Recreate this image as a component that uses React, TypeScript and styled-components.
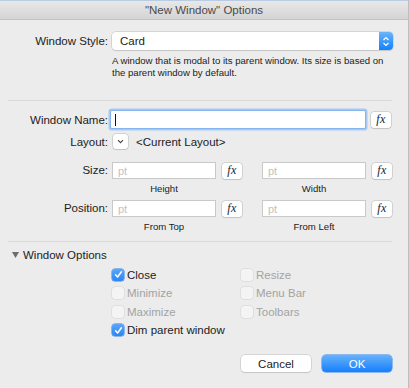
import React from 'react';
import styled, { createGlobalStyle } from 'styled-components';

const GlobalStyle = createGlobalStyle`
  html, body {
    margin: 0;
    padding: 0;
    background: #ececec;
  }
  * {
    box-sizing: border-box;
  }
`;

const FONT = `"Liberation Sans", Arial, sans-serif`;

const Window = styled.div`
  width: 409px;
  height: 388px;
  background: #ececec;
  font-family: ${FONT};
  color: #222;
  border-right: 1px solid #bdbdbd;
  display: flex;
  flex-direction: column;
  overflow: hidden;
`;

const TitleBar = styled.div`
  height: 20px;
  border-top: 1px solid #b9cbe0;
  border-bottom: 1px solid #c4c4c4;
  background: linear-gradient(#e9e8e9, #d5d4d5);
  display: flex;
  align-items: center;
  justify-content: center;
  font-size: 11.5px;
  color: #4a4a4a;
`;

const Section = styled.div<{ $pt: number; $pb: number }>`
  padding: ${(p) => p.$pt}px 16px ${(p) => p.$pb}px 8px;
  display: flex;
  flex-direction: column;
`;

const Separator = styled.div`
  margin: 0 16px 0 8px;
  border-top: 1px solid #d9d9d9;
`;

const FormRow = styled.div<{ $mt?: number; $top?: boolean }>`
  display: grid;
  grid-template-columns: 100px 1fr;
  column-gap: 4px;
  align-items: ${(p) => (p.$top ? 'start' : 'center')};
  margin-top: ${(p) => p.$mt ?? 0}px;
`;

const Label = styled.div<{ $offset?: number }>`
  text-align: right;
  font-size: 11.5px;
  color: #222;
  margin-top: ${(p) => p.$offset ?? 0}px;
`;

const SelectBox = styled.div`
  height: 18px;
  width: 281px;
  background: #fff;
  border-radius: 4px;
  box-shadow: 0 0 0 0.5px #bdbdbd, 0 1px 1px rgba(0, 0, 0, 0.12);
  display: flex;
  align-items: center;
  justify-content: space-between;
  padding-left: 8px;
  font-size: 11.5px;
  color: #222;
`;

const Stepper = styled.div`
  width: 14px;
  height: 18px;
  border-radius: 0 4px 4px 0;
  background: linear-gradient(#6ab4fb, #1282fb);
  display: flex;
  align-items: center;
  justify-content: center;
`;

const Description = styled.div`
  margin: 5px 0 0 104px;
  font-size: 9.6px;
  line-height: 12px;
  color: #222;
`;

const FieldLine = styled.div`
  display: flex;
  align-items: center;
`;

const FocusInput = styled.div`
  width: 254px;
  height: 17px;
  background: #fff;
  margin-left: -1px;
  box-shadow: 0 0 0 1px #86b4ec, 0 0 0 2.5px #a8caf2;
  border-radius: 1px;
  display: flex;
  align-items: center;
  padding-left: 4px;
`;

const Caret = styled.div`
  width: 1px;
  height: 12px;
  background: #111;
`;

const FxButton = styled.div<{ $ml?: number }>`
  width: 20px;
  height: 16px;
  margin-left: ${(p) => p.$ml ?? 6}px;
  background: #fff;
  border-radius: 3px;
  box-shadow: 0 0 0 0.5px #b8b8b8, 0 1px 1px rgba(0, 0, 0, 0.12);
  display: flex;
  align-items: center;
  justify-content: center;
  font-family: "Liberation Serif", "Times New Roman", serif;
  font-style: italic;
  font-size: 12px;
  color: #222;
  letter-spacing: 0.5px;
`;

const SmallPopup = styled.div`
  width: 15px;
  height: 15px;
  margin-left: 1px;
  background: #fff;
  border-radius: 3px;
  box-shadow: 0 0 0 0.5px #b8b8b8, 0 1px 1px rgba(0, 0, 0, 0.12);
  display: flex;
  align-items: center;
  justify-content: center;
`;

const LayoutText = styled.span`
  margin-left: 8px;
  font-size: 11.5px;
  color: #222;
`;

const UnitGroup = styled.div`
  display: grid;
  grid-template-columns: 104px 20px;
  column-gap: 6px;
  row-gap: 4px;
  align-items: center;
`;

const UnitPair = styled.div`
  display: flex;
  gap: 20px;
`;

const UnitInput = styled.div`
  height: 17px;
  background: #fff;
  border: 1px solid #c9c9c9;
  display: flex;
  align-items: center;
  padding-left: 5px;
  font-size: 11px;
  color: #c2c2c2;
`;

const Caption = styled.div`
  text-align: center;
  font-size: 9.6px;
  color: #222;
`;

const DisclosureRow = styled.div`
  display: flex;
  align-items: center;
  gap: 4px;
  padding-left: 4px;
  font-size: 11.5px;
  color: #222;
`;

const OptionsGrid = styled.div`
  display: grid;
  grid-template-columns: 129px 1fr;
  row-gap: 5.5px;
  margin: 7px 0 0 104px;
`;

const CheckItem = styled.div<{ $disabled?: boolean }>`
  display: flex;
  align-items: center;
  gap: 3px;
  height: 13px;
  font-size: 11.5px;
  color: ${(p) => (p.$disabled ? '#a3a3a3' : '#222')};
`;

const Box = styled.div<{ $checked?: boolean }>`
  width: 12px;
  height: 12px;
  border-radius: 3px;
  display: flex;
  align-items: center;
  justify-content: center;
  background: ${(p) => (p.$checked ? 'linear-gradient(#5aa6fa, #2a86f5)' : '#f4f4f4')};
  box-shadow: ${(p) => (p.$checked ? '0 0 0 0.5px #2f7fe0' : '0 0 0 0.5px #d2d2d2')};
`;

const Footer = styled.div`
  display: flex;
  justify-content: flex-end;
  gap: 11px;
  padding: 0 16px 0 0;
  margin-top: auto;
  margin-bottom: 16px;
`;

const PushButton = styled.div<{ $primary?: boolean }>`
  width: 70px;
  height: 17px;
  border-radius: 4px;
  display: flex;
  align-items: center;
  justify-content: center;
  font-size: 11.5px;
  color: ${(p) => (p.$primary ? '#fff' : '#222')};
  background: ${(p) => (p.$primary ? 'linear-gradient(#66b2fc, #167ffb)' : '#fff')};
  box-shadow: ${(p) =>
    p.$primary ? '0 0 0 0.5px #2c83f0' : '0 0 0 0.5px #bdbdbd, 0 1px 1px rgba(0,0,0,0.12)'};
`;

const Check = () => (
  <svg width="9" height="9" viewBox="0 0 9 9">
    <path d="M1.6 4.8 L3.6 7 L7.4 1.8" stroke="#fff" strokeWidth="1.5" fill="none" strokeLinecap="round" strokeLinejoin="round" />
  </svg>
);

const Option = ({ label, checked, disabled }: { label: string; checked?: boolean; disabled?: boolean }) => (
  <CheckItem $disabled={disabled}>
    <Box $checked={checked}>{checked && <Check />}</Box>
    {label}
  </CheckItem>
);

const UnitField = ({ caption }: { caption: string }) => (
  <UnitGroup>
    <UnitInput>pt</UnitInput>
    <FxButton $ml={0}>fx</FxButton>
    <Caption>{caption}</Caption>
  </UnitGroup>
);

export default function App() {
  return (
    <>
      <GlobalStyle />
      <Window>
        <TitleBar>"New Window" Options</TitleBar>

        <Section $pt={12} $pb={21}>
          <FormRow>
            <Label>Window Style:</Label>
            <SelectBox>
              Card
              <Stepper>
                <svg width="8" height="11" viewBox="0 0 8 11">
                  <path d="M1.5 4 L4 1.5 L6.5 4 M1.5 7 L4 9.5 L6.5 7" stroke="#fff" strokeWidth="1.2" fill="none" />
                </svg>
              </Stepper>
            </SelectBox>
          </FormRow>
          <Description>
            A window that is modal to its parent window. Its size is based on
            <br />
            the parent window by default.
          </Description>
        </Section>

        <Separator />

        <Section $pt={10} $pb={9}>
          <FormRow>
            <Label>Window Name:</Label>
            <FieldLine>
              <FocusInput>
                <Caret />
              </FocusInput>
              <FxButton>fx</FxButton>
            </FieldLine>
          </FormRow>
          <FormRow $mt={6}>
            <Label>Layout:</Label>
            <FieldLine>
              <SmallPopup>
                <svg width="7" height="5" viewBox="0 0 7 5">
                  <path d="M1 1.2 L3.5 3.7 L6 1.2" stroke="#444" strokeWidth="1.1" fill="none" />
                </svg>
              </SmallPopup>
              <LayoutText>&lt;Current Layout&gt;</LayoutText>
            </FieldLine>
          </FormRow>
          <FormRow $mt={13} $top>
            <Label $offset={2}>Size:</Label>
            <UnitPair>
              <UnitField caption="Height" />
              <UnitField caption="Width" />
            </UnitPair>
          </FormRow>
          <FormRow $mt={6} $top>
            <Label $offset={2}>Position:</Label>
            <UnitPair>
              <UnitField caption="From Top" />
              <UnitField caption="From Left" />
            </UnitPair>
          </FormRow>
        </Section>

        <Separator />

        <Section $pt={7} $pb={0}>
          <DisclosureRow>
            <svg width="7" height="6" viewBox="0 0 7 6">
              <path d="M0 0 L7 0 L3.5 6 Z" fill="#6d6d6d" />
            </svg>
            Window Options
          </DisclosureRow>
          <OptionsGrid>
            <Option label="Close" checked />
            <Option label="Resize" disabled />
            <Option label="Minimize" disabled />
            <Option label="Menu Bar" disabled />
            <Option label="Maximize" disabled />
            <Option label="Toolbars" disabled />
            <Option label="Dim parent window" checked />
          </OptionsGrid>
        </Section>

        <Footer>
          <PushButton>Cancel</PushButton>
          <PushButton $primary>OK</PushButton>
        </Footer>
      </Window>
    </>
  );
}
